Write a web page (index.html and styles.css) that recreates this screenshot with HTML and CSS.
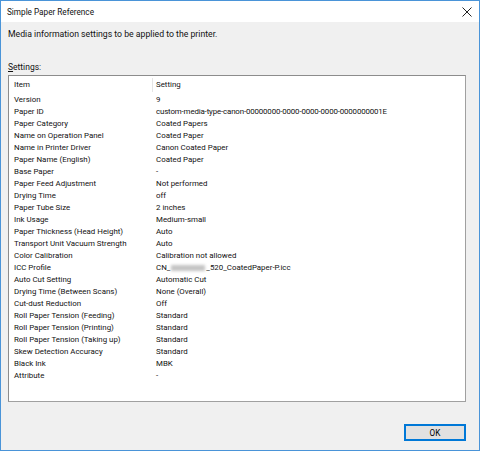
FILE: index.html
```html
<!DOCTYPE html>
<html>
<head>
<meta charset="utf-8">
<title>Simple Paper Reference</title>
<link rel="stylesheet" href="styles.css">
</head>
<body>
<div class="window">
  <div class="titlebar">
    <span class="title">Simple Paper Reference</span>
    <svg class="close" width="10" height="10" viewBox="0 0 10 10"><path d="M0.5 0.5L9.5 9.5M9.5 0.5L0.5 9.5" stroke="#222" stroke-width="1"/></svg>
  </div>
  <div class="client">
    <p class="intro">Media information settings to be applied to the printer.</p>
    <p class="label"><u>S</u>ettings:</p>
    <div class="listbox">
      <div class="head">
        <div class="hcell">Item</div>
        <div class="hcell sep">Setting</div>
      </div>
      <div class="rows">
        <div>Version</div><div>9</div>
        <div>Paper ID</div><div class="id">custom-media-type-canon-00000000-0000-0000-0000-0000000001E</div>
        <div>Paper Category</div><div>Coated Papers</div>
        <div>Name on Operation Panel</div><div>Coated Paper</div>
        <div>Name in Printer Driver</div><div>Canon Coated Paper</div>
        <div>Paper Name (English)</div><div>Coated Paper</div>
        <div>Base Paper</div><div>-</div>
        <div>Paper Feed Adjustment</div><div>Not performed</div>
        <div>Drying Time</div><div>off</div>
        <div>Paper Tube Size</div><div>2 inches</div>
        <div>Ink Usage</div><div>Medium-small</div>
        <div>Paper Thickness (Head Height)</div><div>Auto</div>
        <div>Transport Unit Vacuum Strength</div><div>Auto</div>
        <div>Color Calibration</div><div>Calibration not allowed</div>
        <div>ICC Profile</div><div>CN_<span class="blur"></span>_520_CoatedPaper-P.icc</div>
        <div>Auto Cut Setting</div><div>Automatic Cut</div>
        <div>Drying Time (Between Scans)</div><div>None (Overall)</div>
        <div>Cut-dust Reduction</div><div>Off</div>
        <div>Roll Paper Tension (Feeding)</div><div>Standard</div>
        <div>Roll Paper Tension (Printing)</div><div>Standard</div>
        <div>Roll Paper Tension (Taking up)</div><div>Standard</div>
        <div>Skew Detection Accuracy</div><div>Standard</div>
        <div>Black Ink</div><div>MBK</div>
        <div>Attribute</div><div>-</div>
      </div>
    </div>
    <div class="footer">
      <button class="ok">OK</button>
    </div>
  </div>
</div>
</body>
</html>
```

FILE: styles.css
```css
*{
  margin:0;
  padding:0;
  box-sizing:border-box;
}
html, body{
  width:480px;
  height:451px;
  overflow:hidden;
  background:#fff;
}
body{
  font-family:Roboto, "Liberation Sans", Arial, sans-serif;
  font-size:7.9px;
  color:#111;
}
.window{
  width:480px;
  height:451px;
  border:1px solid #4a94d8;
  display:flex;
  flex-direction:column;
  background:#f0f0f0;
}
.titlebar{
  height:21px;
  background:#fff;
  display:flex;
  align-items:center;
  justify-content:space-between;
  padding:0 7px 0 6px;
  flex:none;
}
.title{
  font-size:8.2px;
}
.close{
  display:block;
}
.client{
  flex:1;
  display:flex;
  flex-direction:column;
  padding:6px 13px 0 7px;
}
.intro{
  font-size:8.7px;
  line-height:12px;
}
.label{
  font-size:8.5px;
  line-height:12px;
  margin-top:21px;
}
.listbox{
  margin-top:2px;
  height:327px;
  background:#fff;
  border:1px solid #a0a0a0;
  border-top-color:#8c8c8c;
  border-left-color:#8c8c8c;
  padding:0 0 0 5px;
}
.head{
  display:flex;
  height:18px;
  align-items:center;
}
.hcell{
  width:138px;
  line-height:12px;
}
.hcell.sep{
  border-left:1px solid #e5e5e5;
  padding-left:3px;
  height:14px;
  line-height:14px;
}
.rows{
  display:grid;
  grid-template-columns:142px 1fr;
  grid-auto-rows:12px;
  line-height:12px;
  white-space:nowrap;
}
.id{
  letter-spacing:-0.15px;
}
.blur{
  display:inline-block;
  width:34px;
  height:6px;
  margin:0 1px;
  background:#c4c4c4;
  filter:blur(1.5px);
  vertical-align:middle;
}
.footer{
  flex:1;
  display:flex;
  justify-content:flex-end;
  align-items:flex-start;
  padding-top:22px;
}
.ok{
  width:62px;
  height:17px;
  font-family:Roboto, "Liberation Sans", Arial, sans-serif;
  font-size:8.2px;
  background:#e1e1e1;
  border:1px solid #0078d7;
  box-shadow:inset 0 0 0 1px #0078d7;
  color:#000;
}
```
